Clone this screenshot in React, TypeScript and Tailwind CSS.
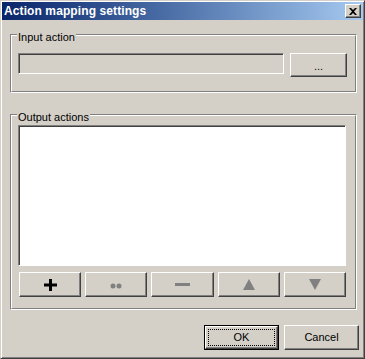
import React from 'react';

const face = 'bg-[#d4d0c8]';

const Raised: React.FC<{ className?: string; children?: React.ReactNode }> = ({ className = '', children }) => (
    <div className={`flex items-center justify-center border border-t-white border-l-white border-b-[#404040] border-r-[#404040] shadow-[inset_-1px_-1px_0_#808080] ${face} ${className}`}>
        {children}
    </div>
);

const GroupBox: React.FC<{ label: string; className?: string; children?: React.ReactNode }> = ({ label, className = '', children }) => (
    <div className={`relative border border-t-[#808080] border-l-[#808080] border-b-white border-r-white ${className}`}>
        <div className="h-full border border-t-white border-l-white border-b-[#808080] border-r-[#808080]">
            {children}
        </div>
        <span className={`absolute left-[6px] top-[-4px] px-[1px] text-[11px] leading-[13px] text-black ${face}`}>{label}</span>
    </div>
);

const App: React.FC = () => {
    return (
        <div className="w-[365px] h-[359px] font-['Liberation_Sans',Arial,sans-serif]">
            <div className={`w-full h-full p-[1px] border border-t-[#d4d0c8] border-l-[#d4d0c8] border-b-[#404040] border-r-[#404040] shadow-[inset_1px_1px_0_#fff,inset_-1px_-1px_0_#808080] ${face} flex flex-col`}>
                {/* title bar */}
                <div className="h-[18px] flex items-center pl-[2px] pr-[2px] bg-gradient-to-r from-[#0a246a] to-[#a6caf0]">
                    <span className="flex-1 text-white font-bold text-[12px] leading-[18px] tracking-[0.1px]">Action mapping settings</span>
                    <Raised className="w-[16px] h-[14px]">
                        <svg width="8" height="7" viewBox="0 0 8 7">
                            <path d="M0 0h2l2 2 2-2h2L5 3.5 8 7H6L4 5 2 7H0l3-3.5z" fill="#000" />
                        </svg>
                    </Raised>
                </div>

                <div className="flex-1 flex flex-col pl-[8px] pr-[6px]">
                    {/* Input action */}
                    <GroupBox label="Input action" className="mt-[14px] h-[59px]">
                        <div className="flex items-start gap-[6px] px-[6px] pt-[17px]">
                            <div className="w-[266px] h-[21px] border border-t-[#808080] border-l-[#808080] border-b-white border-r-white shadow-[inset_1px_1px_0_#404040] bg-[#d4d0c8]" />
                            <Raised className="w-[57px] h-[24px]">
                                <span className="text-[11px] leading-none text-black pt-[3px]">...</span>
                            </Raised>
                        </div>
                    </GroupBox>

                    {/* Output actions */}
                    <GroupBox label="Output actions" className="mt-[21px] h-[196px]">
                        <div className="flex flex-col pl-[6px] pr-[6px] pt-[9px]">
                            <div className="w-[328px] h-[141px] border border-t-[#808080] border-l-[#808080] border-b-white border-r-white shadow-[inset_1px_1px_0_#404040] bg-white" />
                            <div className="flex gap-[4px] mt-[6px] pl-[1px] w-[328px]">
                                <Raised className="flex-1 h-[25px]">
                                    <svg width="13" height="12" viewBox="0 0 13 12">
                                        <rect x="5" y="0" width="3" height="12" fill="#000" />
                                        <rect x="0" y="4.5" width="13" height="3" fill="#000" />
                                    </svg>
                                </Raised>
                                <Raised className="flex-1 h-[25px]">
                                    <svg width="12" height="6" viewBox="0 0 12 6" className="mt-[3px]">
                                        <circle cx="3" cy="3" r="2.5" fill="#808080" />
                                        <circle cx="9" cy="3" r="2.5" fill="#808080" />
                                    </svg>
                                </Raised>
                                <Raised className="flex-1 h-[25px]">
                                    <svg width="15" height="3" viewBox="0 0 15 3">
                                        <rect x="0" y="0" width="15" height="3" fill="#808080" />
                                    </svg>
                                </Raised>
                                <Raised className="flex-1 h-[25px]">
                                    <svg width="12" height="11" viewBox="0 0 12 11">
                                        <path d="M6 0L12 11H0z" fill="#808080" />
                                    </svg>
                                </Raised>
                                <Raised className="flex-1 h-[25px]">
                                    <svg width="12" height="11" viewBox="0 0 12 11">
                                        <path d="M0 0H12L6 11z" fill="#808080" />
                                    </svg>
                                </Raised>
                            </div>
                        </div>
                    </GroupBox>

                    {/* dialog buttons */}
                    <div className="flex justify-end gap-[5px] mt-[15px] mr-[-2px]">
                        <div className="w-[75px] h-[25px] border border-black">
                            <Raised className="w-full h-full">
                                <div className="w-[67px] h-[17px] border border-dotted border-black flex items-center justify-center">
                                    <span className="text-[11px] leading-none text-black">OK</span>
                                </div>
                            </Raised>
                        </div>
                        <Raised className="w-[75px] h-[25px]">
                            <span className="text-[11px] leading-none text-black">Cancel</span>
                        </Raised>
                    </div>
                </div>
            </div>
        </div>
    );
};

export default App;
